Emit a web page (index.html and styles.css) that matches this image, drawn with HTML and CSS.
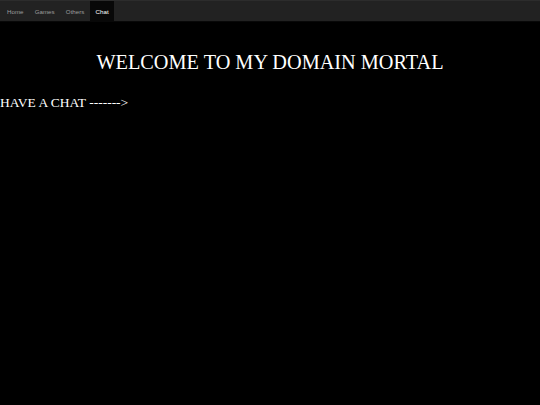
FILE: index.html
```html
<!DOCTYPE html>
<html>
<head>
<meta charset="utf-8">
<link rel="stylesheet" href="styles.css">
</head>
<body>
<nav class="navbar">
  <ul class="nav">
    <li><a href="#">Home</a></li>
    <li><a href="#">Games</a></li>
    <li><a href="#">Others</a></li>
    <li class="active"><a href="#">Chat</a></li>
  </ul>
</nav>
<h1 class="title">WELCOME TO MY DOMAIN MORTAL</h1>
<p class="chat">HAVE A CHAT -------&gt;</p>
</body>
</html>
```
FILE: styles.css
```css
html, body {
  margin: 0;
  padding: 0;
  background: #000;
  color: #fff;
  font-family: "Liberation Serif", serif;
  height: 100%;
}
.navbar {
  background: #222;
  border-top: 1px solid #2c2c2c;
  border-bottom: 1px solid #080808;
  height: 20px;
}
.nav {
  list-style: none;
  margin: 0;
  padding: 0 0 0 1.4px;
  display: flex;
  height: 100%;
}
.nav li {
  display: flex;
}
.nav a {
  display: flex;
  align-items: center;
  padding: 0 5.6px;
  font-family: "Liberation Sans", Arial, sans-serif;
  font-size: 6.2px;
  color: #9d9d9d;
  text-decoration: none;
}
.nav .active a {
  background: #080808;
  color: #fff;
}
.title {
  margin: 27px 0 0;
  text-align: center;
  font-weight: normal;
  font-size: 20.3px;
  line-height: 26px;
}
.chat {
  margin: 19px 0 0;
  font-size: 13.5px;
  line-height: 18px;
}
```
